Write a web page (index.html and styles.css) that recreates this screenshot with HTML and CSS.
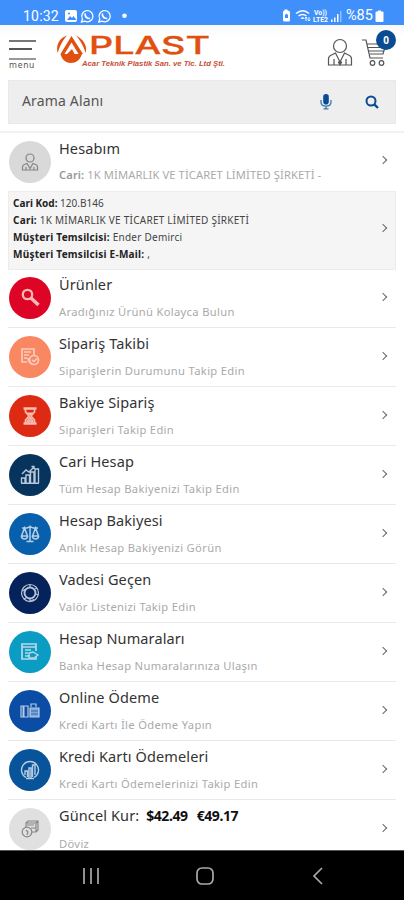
FILE: index.html
```html
<!DOCTYPE html>
<html lang="tr">
<head>
<meta charset="utf-8">
<title>Aplast</title>
<link rel="stylesheet" href="styles.css">
</head>
<body>
<div class="status">
  <span class="clock">10:32</span>
  <svg class="st-left" width="70" height="16" viewBox="0 0 70 16">
    <rect x="1" y="2" width="12" height="12" rx="2" fill="#fff"/><path d="M3 12l3-4 2 2 1.500-2 3 4z" fill="#3f90fb"/><circle cx="5" cy="5.500" r="1" fill="#3f90fb"/>
    <g fill="none" stroke="#fff" stroke-width="1.300"><path d="M17.500 14l1-3a5.600 5.600 0 1 1 2.300 2.200z"/><path d="M34.800 14l1-3a5.600 5.600 0 1 1 2.300 2.200z"/></g>
    <g fill="none" stroke="#fff" stroke-width="1.700"><path d="M21 5.500c0 3 2 5 5 5"/><path d="M38.300 5.500c0 3 2 5 5 5"/></g>
    <circle cx="60.500" cy="7.700" r="2.300" fill="#fff"/>
  </svg>
  <svg class="st-right" width="64" height="16" viewBox="0 0 64 16">
    <path d="M2 4q0-1.500 1.500-1.500V1.500h3v1Q9 2.500 9 4v8q0 1.500-1.500 1.500h-4Q2 13.500 2 12z" fill="#fff"/><path d="M4 10V7l1.500-1.500L7 7v3z" fill="#3f90fb"/>
    <g fill="none" stroke="#fff" stroke-width="1.500"><path d="M15 5.500q7-5.500 13 0M17.500 8q4-3 8 0M20 10.500q1.500-1 3 0"/></g>
    <path d="M25 13V9.500M23.800 10.500L25 9l1.200 1.500M28 9v3.500M26.800 11.500L28 13l1.200-1.500" stroke="#fff" fill="none"/>
    <text x="33" y="7" textLength="13" lengthAdjust="spacingAndGlyphs">Vo))</text><text x="32" y="14" textLength="15" lengthAdjust="spacingAndGlyphs">LTE2</text>
    <path d="M50 14v-2.500h1.500V14zM53 14v-4.500h1.500V14zM56 14V6h1.500v8z" fill="#fff"/><path d="M59 14V3h1.500v11z" fill="#8fc0ff"/>
  </svg>
  <span class="pct">%85</span>
  <svg class="batt" width="9" height="14" viewBox="0 0 9 14"><path d="M.5 3.500q0-1 1-1H3V1.500h3v1h1.500q1 0 1 1V12q0 1-1 1h-6q-1 0-1-1z" fill="#fff"/></svg>
</div>

<header class="header">
  <div class="menu"><i></i><i class="short"></i><i></i><span>menu</span></div>
  <svg class="logo" width="172" height="36" viewBox="0 0 172 36">
    <g fill="#e05011">
      <path d="M11 .5C3 3-.500 11 1.800 18C4 10 7 5 11 .5zM20 .5c7 3.500 11.500 10 9.800 17.500C27 10 24 5 20 .5z"/>
      <path d="M15.500 1L4.500 19h4l7-11.500 7 11.500H27z"/>
      <path d="M11 19l5-5 2.500 5z"/><path d="M4.500 19h21.500C24 25 20 28 15 28S6 25 4.500 19z"/>
    </g>
    <text class="brand" x="33" y="19" textLength="121" lengthAdjust="spacingAndGlyphs">PLAST</text>
    <text class="tag" x="26" y="31" textLength="143" lengthAdjust="spacingAndGlyphs">Acar Teknik Plastik San. ve Tic. Ltd Şti.</text>
  </svg>
  <svg class="user" width="26" height="29" viewBox="0 0 26 29" fill="none" stroke="#555" stroke-width="1.200"><circle cx="13" cy="8" r="6.500"/><path d="M1.500 27v-6q0-3 3-4l4-2L13 24l4.500-9 4 2q3 1 3 4v6zM7 27v-6M19 27v-6"/><path d="M11.500 23.500L13 26l1.500-2.500" stroke-width="2"/></svg>
  <div class="cart">
    <svg width="26" height="29" viewBox="0 0 26 29" fill="none" stroke="#555" stroke-width="1.200"><path d="M0 2h4l4 18h13M4.500 6H24l-3 10H8M6 9.500h17M7 13h15"/><circle cx="10.500" cy="25" r="2.300"/><circle cx="19.500" cy="25" r="2.300"/></svg>
    <b>0</b>
  </div>
</header>

<div class="search">
  <span>Arama Alanı</span>
  <svg class="mic" width="12" height="16" viewBox="0 0 12 16"><rect x="3.200" y="0" width="5.600" height="10.500" rx="2.800" fill="#0b4b91"/><path d="M1 6v2q0 4.200 5 4.200T11 8V6M6 12v3M3.500 14.800h5" fill="none" stroke="#3a78ad" stroke-width="1.300"/></svg>
  <svg width="14" height="14" viewBox="0 0 14 14" fill="none" stroke="#0b4b91" stroke-width="2"><circle cx="6" cy="6" r="4.500"/><path d="M9.300 9.300L13 13" stroke-width="2.400"/></svg>
</div>

<main class="list">
  <section class="row account">
    <div class="ico gray"><svg viewBox="0 0 20 20"><circle cx="10" cy="6" r="4"/><path d="M2.500 18v-3q0-2 2-2.500L7 11.500l3 5 3-5 2.500 1q2 .500 2 2.500v3zM6 18v-3M14 18v-3"/></svg></div>
    <div class="txt"><h2>Hesabım</h2><p class="owner"><b>Cari:</b> 1K MİMARLIK VE TİCARET LİMİTED ŞİRKETİ -</p></div><i class="chev"></i>
  </section>
  <section class="info">
    <div><p class="code"><b>Cari Kod:</b> 120.B146</p><p><b>Cari:</b> 1K MİMARLIK VE TİCARET LİMİTED ŞİRKETİ</p><p><b>Müşteri Temsilcisi:</b> Ender Demirci</p><p><b>Müşteri Temsilcisi E-Mail:</b> ,</p></div><i class="chev"></i>
  </section>
  <section class="row first">
    <div class="ico red"><svg viewBox="0 0 20 20"><circle cx="7.500" cy="6.500" r="4.700" stroke-width="2.300"/><path d="M11 10l7.500 7" stroke-width="3.500"/></svg></div>
    <div class="txt"><h2>Ürünler</h2><p>Aradığınız Ürünü Kolayca Bulun</p></div><i class="chev"></i>
  </section>
  <section class="row">
    <div class="ico salmon"><svg viewBox="0 0 20 20"><path d="M7 15H2V2h12v6M4 5h7M4 8h5M4 11h3" stroke-width="1.700"/><circle cx="14" cy="13" r="4.500" stroke-width="1.700"/><path d="M8 11q0 4 4 6M12 13l2 1.500 3-3" stroke-width="1.700"/></svg></div>
    <div class="txt"><h2>Sipariş Takibi</h2><p>Siparişlerin Durumunu Takip Edin</p></div><i class="chev"></i>
  </section>
  <section class="row">
    <div class="ico orange"><svg viewBox="0 0 20 20"><path d="M3.500 2.500h13M3.500 17.500h13" stroke-width="2.500"/><path d="M5.500 3v3L9 10l-3.500 4v3M14.500 3v3L11 10l3.500 4v3" stroke-width="1.700"/><path d="M7 15l3-4 3 4v1H7zM8 7h4l-2 2z" fill="#f5c0b8"/></svg></div>
    <div class="txt"><h2>Bakiye Sipariş</h2><p>Siparişleri Takip Edin</p></div><i class="chev"></i>
  </section>
  <section class="row">
    <div class="ico navy"><svg viewBox="0 0 20 20"><path d="M1.500 18v-5h3.500v5M6 18v-8h3.500v8M10.500 18V7H14v11M15 18V4h3.500v14M1 18.300h18M2 9l4-4 3 2 5-5M11.500 1.500H14V4" stroke-width="1.400"/></svg></div>
    <div class="txt"><h2>Cari Hesap</h2><p>Tüm Hesap Bakiyenizi Takip Edin</p></div><i class="chev"></i>
  </section>
  <section class="row">
    <div class="ico blue"><svg viewBox="0 0 20 20"><path d="M2 4h5q3-2 6 0h5M10 1.500v16M6.500 17.500h7M4.500 4L1.500 12h6zM15.500 4l-3 8h6zM1.500 12q0 3 3 3t3-3M12.500 12q0 3 3 3t3-3" stroke-width="1.500"/></svg></div>
    <div class="txt"><h2>Hesap Bakiyesi</h2><p>Anlık Hesap Bakiyenizi Görün</p></div><i class="chev"></i>
  </section>
  <section class="row">
    <div class="ico ink"><svg viewBox="0 0 20 20"><circle cx="10" cy="10" r="8.500"/><circle cx="10" cy="10" r="5.500" stroke-width="1.900"/><path d="M2 8l4-2M6 15l-2 1M10 15v3.500l4-2M15 6l2-1M10 4.500V2M15.500 11l3 1"/></svg></div>
    <div class="txt"><h2>Vadesi Geçen</h2><p>Valör Listenizi Takip Edin</p></div><i class="chev"></i>
  </section>
  <section class="row">
    <div class="ico cyan"><svg viewBox="0 0 20 20"><path d="M16 9V2H2v15h14v-2M2 5h14" stroke-width="1.700"/><path d="M5 8h6M5 11h3M5 14h5M9 11l4-1 5 3-4 3H9z" stroke-width="1.400"/></svg></div>
    <div class="txt"><h2>Hesap Numaraları</h2><p>Banka Hesap Numaralarınıza Ulaşın</p></div><i class="chev"></i>
  </section>
  <section class="row">
    <div class="ico royal"><svg viewBox="0 0 20 20"><path d="M1 5h7v11H1z"/><path d="M3.500 5v11" stroke-width="2"/><path d="M10 7h9v9h-9z" fill="#8db8e4"/><path d="M11 6V3h5v3"/><path d="M11 10h7M11 13h7" stroke="#416fb1"/></svg></div>
    <div class="txt"><h2>Online Ödeme</h2><p>Kredi Kartı İle Ödeme Yapın</p></div><i class="chev"></i>
  </section>
  <section class="row">
    <div class="ico steel"><svg viewBox="0 0 20 20"><path d="M6 17.500a8.500 8.500 0 1 1 8 0M5 15v-4h2.500v6M9 18V8h2v10M12.500 17V5H15v10M6 18.500h8" stroke-width="1.400"/></svg></div>
    <div class="txt"><h2>Kredi Kartı Ödemeleri</h2><p>Kredi Kartı Ödemelerinizi Takip Edin</p></div><i class="chev"></i>
  </section>
  <section class="row">
    <div class="ico pale"><svg viewBox="0 0 20 20"><path d="M6 8V4l2-2h10v9l-2 2h-4M6 4h10v9M16 4l2-2M7 6h7M11 9h5"/><circle cx="7" cy="13" r="4.800"/><path d="M6 11l2 2-1 3"/></svg></div>
    <div class="txt"><h2 class="rates">Güncel Kur: <b>$42.49</b> <b>€49.17</b></h2><p>Döviz</p></div><i class="chev"></i>
  </section>
</main>

<nav class="nav">
  <svg width="18" height="18" viewBox="0 0 18 18"><path d="M2 1v16M9 1v16M16 1v16"/></svg>
  <svg width="18" height="18" viewBox="0 0 18 18"><rect x="1" y="1" width="16" height="16" rx="5"/></svg>
  <svg width="18" height="18" viewBox="0 0 18 18"><path d="M13 1L5 9l8 8"/></svg>
</nav>
</body>
</html>
```
FILE: styles.css
```css
* { box-sizing: border-box; }
body { margin: 0; width: 404px; height: 900px; overflow: hidden; display: flex; flex-direction: column; background: #fff; font-family: "Noto Sans", "Open Sans", sans-serif; color: #333; }
h2, p { margin: 0; font-weight: 400; white-space: nowrap; }
svg { display: block; flex: none; }

.status { height: 25px; flex: none; background: #3f90fb; display: flex; align-items: center; padding: 6px 20px 0 23px; color: #fff; font-family: Roboto, sans-serif; }
.clock { width: 41px; font-size: 14px; letter-spacing: .2px; }
.st-right { margin-left: auto; }
.st-right text { fill: #fff; font-size: 7px; font-weight: 700; }
.pct { font-size: 14.5px; width: 29px; margin-left: 1px; }

.header { height: 55px; flex: none; display: flex; padding: 0 8px; background: linear-gradient(#f8f8f8, #fff 12px); }
.menu { width: 28px; padding-top: 15px; margin-left: 1px; }
.menu i { display: block; height: 2px; background: #777; margin-bottom: 6px; width: 27px; }
.menu i.short { width: 23px; background: #555; margin-bottom: 8px; }
.menu i:nth-of-type(3) { margin-bottom: 0; background: #999; }
.menu span { display: block; font-size: 8.5px; line-height: 9px; letter-spacing: .7px; color: #555; }
.logo { margin: 10px 0 0 19px; overflow: visible; }
.brand { font: 500 24.5px Inter, sans-serif; fill: #e05011; stroke: #e05011; stroke-width: .3px; }
.tag { font: italic 700 7.5px "Liberation Sans", sans-serif; fill: #c65038; }
.user { margin: 13px 0 0 99px; }
.cart { position: relative; margin: 13px 0 0 9px; }
.cart b { position: absolute; left: 14px; top: -8px; width: 20px; height: 20px; border-radius: 50%; background: #0b4b91; color: #fff; font-size: 10px; line-height: 20px; text-align: center; }

.search { height: 44px; flex: none; margin: 0 8px; padding: 0 16px 0 13px; background: #eee; border: 1px solid #e9e9e9; display: flex; align-items: center; font-size: 14px; color: #555; }
.search span { flex: 1; letter-spacing: .15px; padding-bottom: 3px; }
.mic { margin-right: 33px; }

.list { height: 719px; flex: none; margin-top: 7px; border-top: 2px solid #f2f2f2; overflow: hidden; padding: 0 8px; }
.row { height: 59px; display: flex; align-items: flex-start; padding: 8px 8px 0 1px; border-bottom: 1px solid #e9e9e9; }
.account { height: 58px; border: 0; }
.first { height: 58px; padding-top: 7px; }
.ico { width: 42px; height: 42px; flex: none; border-radius: 50%; display: flex; align-items: center; justify-content: center; }
.ico svg { width: 20px; height: 20px; fill: none; stroke: #d6e2ef; stroke-width: 1.200; opacity: .85; }
.gray { background: #d9d9d9; }
.pale { background: #e0e0e0; }
.ico.gray svg, .ico.pale svg { stroke: #777; }
.red { background: #dd0426; }
.salmon { background: #f98762; }
.orange { background: #dc2b12; }
.ico.red svg, .ico.salmon svg, .ico.orange svg { stroke: #ffd8d0; }
.navy { background: #07345d; }
.blue { background: #0860ac; }
.ink { background: #05225a; }
.cyan { background: #0b9cc4; }
.royal { background: #0b4da4; }
.steel { background: #07549a; }
.txt { flex: 1; margin-left: 8px; }
.txt h2 { font-size: 14.5px; line-height: 20px; margin-top: -3px; color: #333; letter-spacing: .12px; }
.txt h2 b { color: #111; font-size: 14px; margin-left: 3px; letter-spacing: -.4px; }
.txt h2 b + b { margin-left: 5px; }
.txt p { font-size: 11.2px; line-height: 16px; margin-top: 10px; color: #aaa; letter-spacing: .33px; }
.txt p.owner { letter-spacing: .1px; margin-top: 9px; }
.txt p b { color: #999; font-weight: 600; }
.chev { width: 6px; height: 6px; flex: none; border: solid #666; border-width: 1.500px 1.500px 0 0; transform: rotate(45deg); margin: 17px 2px 0 0; }
.account .chev { margin-top: 16px; }
.info { height: 79px; background: #f5f5f5; border: 1px solid #ececec; display: flex; align-items: center; padding: 0 7px 4px 4px; }
.info div { flex: 1; }
.info p { font-size: 10px; line-height: 17px; color: #444; letter-spacing: .25px; }
.info p.code { letter-spacing: 0; }
.info b { color: #222; }
.info .chev { margin-top: -1px; }

.nav { flex: 1; background: #000; border-top: 1px solid #555; display: flex; justify-content: space-between; align-items: center; padding: 1px 77px 0 82px; }
.nav svg { fill: none; stroke: #aaa; stroke-width: 1.700; }
```
